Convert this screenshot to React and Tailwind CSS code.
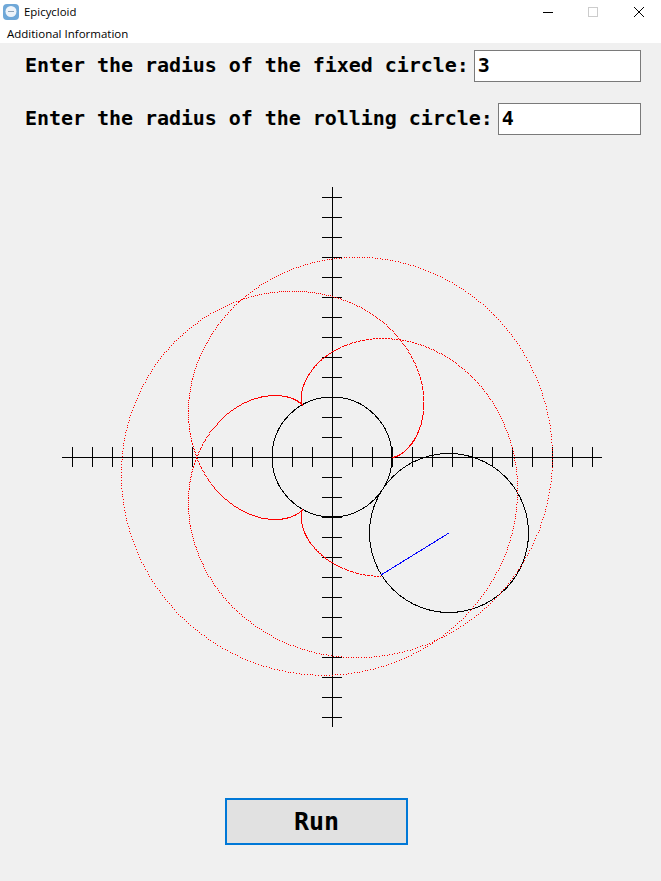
import { useMemo } from "react";

const CX = 332;
const CY = 457;
const SCALE = 20;

// epicycloid for fixed radius 3, rolling radius 4, stopped part way round
function curvePath(R, r, end) {
  let d = "";
  for (let t = 0; t <= end; t += 0.01) {
    const k = (R + r) / r;
    const x = (R + r) * Math.cos(t) - r * Math.cos(k * t);
    const y = (R + r) * Math.sin(t) - r * Math.sin(k * t);
    d += `M${Math.round(CX + x * SCALE)} ${Math.round(CY - y * SCALE)}h1v1h-1z`;
  }
  return d;
}

function ticks() {
  let d = `M62 ${CY}.5H602M${CX}.5 187V727`;
  for (let i = -13; i <= 13; i++) {
    if (i === 0) continue;
    d += `M${CX + i * SCALE}.5 447V467M322 ${CY + i * SCALE}.5H342`;
  }
  return d;
}

function AppIcon() {
  return (
    <svg width="16" height="16" viewBox="0 0 16 16" className="ml-[3px]">
      <rect x="0" y="0" width="16" height="16" rx="4" fill="#6fa8d8" />
      <circle cx="8" cy="7.5" r="5.5" fill="#eef4fa" />
      <rect x="5" y="7" width="6" height="1" fill="#8fa6ba" />
    </svg>
  );
}

function Row({ label, value, inputClass, rowClass }) {
  return (
    <div className={`flex items-center pl-[25px] ${rowClass}`}>
      <span className="pb-[2px] font-['DejaVu_Sans_Mono',monospace] text-[20px] leading-none font-bold tracking-[-0.05px] text-black whitespace-pre">
        {label}
      </span>
      <input
        readOnly
        value={value}
        className={`ml-[5px] h-[32px] border border-[#7a7a7a] bg-white pb-[2px] pl-[3px] font-['DejaVu_Sans_Mono',monospace] text-[20px] font-bold text-black outline-none ${inputClass}`}
      />
    </div>
  );
}

export default function App() {
  const curve = useMemo(() => curvePath(3, 4, (1046.6 * Math.PI) / 180), []);
  return (
    <div className="flex h-[881px] w-[661px] flex-col overflow-hidden bg-[#f0f0f0]">
      {/* title bar */}
      <div className="flex h-[23px] items-center bg-white">
        <AppIcon />
        <span className="ml-[5px] font-['Open_Sans',sans-serif] text-[11.4px] text-black">Epicycloid</span>
        <div className="ml-auto flex items-center">
          <svg width="118" height="23" viewBox="0 0 118 23">
            <path d="M0 12.5H10" stroke="#000" fill="none" shapeRendering="crispEdges" />
            <rect x="45.5" y="7.5" width="9" height="9" stroke="#ccc" fill="none" shapeRendering="crispEdges" />
            <path d="M91 7L101 17M101 7L91 17" stroke="#000" fill="none" />
          </svg>
        </div>
      </div>
      {/* menu */}
      <div className="flex h-[20px] items-center bg-white pt-[2px] pl-[7px] font-['Open_Sans',sans-serif] text-[11.5px] text-black">
        Additional Information
      </div>

      <Row
        label="Enter the radius of the fixed circle:"
        value="3"
        rowClass="mt-[7px]"
        inputClass="w-[167px]"
      />
      <Row
        label="Enter the radius of the rolling circle:"
        value="4"
        rowClass="mt-[21px]"
        inputClass="w-[143px]"
      />

      <svg width="661" height="600" viewBox="0 150 661 600" className="mt-[15px] block shrink-0">
        <path d={ticks()} stroke="#000" fill="none" shapeRendering="crispEdges" />
        <circle cx={CX} cy={CY} r="60" stroke="#000" fill="none" shapeRendering="crispEdges" />
        <circle cx="449" cy="533" r="79.5" stroke="#000" fill="none" shapeRendering="crispEdges" />
        <path d={curve} fill="#f00" shapeRendering="crispEdges" />
        <path d="M449 533L381 575" stroke="#00f" fill="none" shapeRendering="crispEdges" />
      </svg>

      <button className="mt-[48px] ml-[225px] h-[47px] w-[183px] border-2 border-[#0078d7] bg-[#e1e1e1] font-['DejaVu_Sans_Mono',monospace] text-[25px] font-bold text-black">
        Run
      </button>
    </div>
  );
}
